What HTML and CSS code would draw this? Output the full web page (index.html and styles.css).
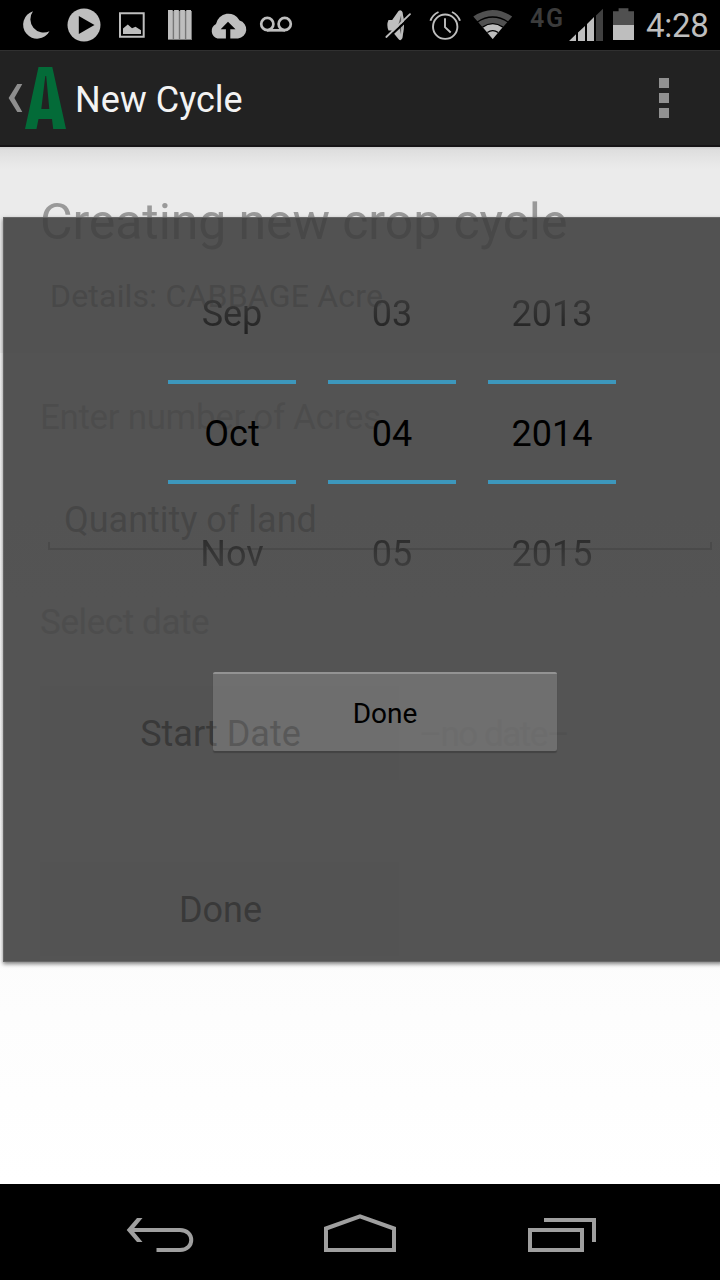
FILE: index.html
```html
<!DOCTYPE html>
<html lang="en">
<head>
<meta charset="utf-8">
<title>New Cycle</title>
<link rel="stylesheet" href="styles.css">
</head>
<body>
<div class="screen">
  <header class="status">
    <svg class="ico" width="60" height="50" viewBox="0 0 60 50"><path fill="#bebebe" d="M33 11.3A14 14 0 1 0 49.5 31.2A13.3 13.3 0 0 1 33 11.3Z"/></svg>
    <svg class="ico" width="48" height="50" viewBox="60 0 48 50"><circle cx="84" cy="25" r="16.5" fill="#bebebe"/><path d="M78.8 16L94.5 25L78.8 34Z"/></svg>
    <svg class="ico" width="48" height="50" viewBox="108 0 48 50"><path fill="none" stroke="#bebebe" stroke-width="2" d="M120 13.3h23.7v23.4H120z"/><path fill="#bebebe" d="M123 28.5L127.8 24.6L132 28.2L135.5 26.8L141 30.2V34H123Z"/></svg>
    <svg class="ico" width="48" height="50" viewBox="156 0 48 50"><path fill="#777" d="M168 11h24v29h-24z"/><path fill="#bebebe" d="M168 10h4.7v29H168zM174.1 10h4.7v29h-4.7zM180.2 10h4.7v29h-4.7zM186.3 10h4.7v29h-4.7z"/></svg>
    <svg class="ico" width="48" height="50" viewBox="204 0 48 50"><path fill="#bebebe" d="M217.5 38.5A7.8 7.8 0 0 1 216 24A12.6 12.6 0 0 1 239.6 20.5A9.2 9.2 0 0 1 238 38.5Z"/><path d="M228 21.8L235.5 29.3H230.3V39H225.9V29.3H220.7Z"/></svg>
    <svg class="ico" width="48" height="50" viewBox="252 0 48 50"><g fill="none" stroke="#bebebe" stroke-width="2.7"><circle cx="267.3" cy="24" r="6.1"/><circle cx="284.7" cy="24" r="6.1"/><path d="M267 30.3h18"/></g></svg>
    <span class="grow"></span>
    <svg class="ico" width="44" height="50" viewBox="376 0 44 50"><path fill="#bebebe" d="M388.500 20h3.700L398.500 11Q400.800 9 402.500 12V38Q400.500 42 398 38.500L391.500 30.500H388.500Q386.200 25 388.500 20Z"/><path d="M398.500 24L401.200 15V35Z" opacity=".55"/><path fill="none" stroke="#bebebe" stroke-width="1.6" d="M401 11.5Q403.400 17 403.200 25T401 38"/><path stroke="#000" stroke-width="2.4" d="M387.500 38.500L412 15.500"/><path stroke="#bebebe" stroke-width="1.8" stroke-linecap="round" d="M386.300 37L410 14.200"/></svg>
    <svg class="ico" width="48" height="50" viewBox="420 0 48 50"><g fill="none" stroke="#bebebe" stroke-width="1.9"><circle cx="445.2" cy="26.7" r="12.2"/><path d="M445 18.3v8.8l5.7 5.4M430.400 20.800Q432.300 15 438.500 12M460 20.800Q458 15 452 12"/></g></svg>
    <svg class="ico" width="56" height="50" viewBox="468 0 56 50"><path fill="#505050" d="M492.7 39L473.3 16.5Q492.7 3.5 512.2 16.5Z"/><path fill="#bebebe" d="M492.7 39L482.7 27Q492.7 20.7 502.7 27Z"/><g fill="none" stroke="#000" stroke-width="1.3"><path d="M477 22.2Q492.7 11.8 508.4 22.2M482.5 27.1Q492.7 20 503 27.1M487.3 32.5Q492.7 28.7 498.2 32.5"/></g></svg>
    <span class="net">4G</span>
    <svg class="ico" width="38" height="50" viewBox="568 0 38 50"><path fill="#bebebe" d="M569 41L576 34.2V41zM578 32.5L585 26V41h-7zM587 24L594 17V41h-7z"/><path fill="#404040" d="M596 15.5L603 8.8V41h-7z"/></svg>
    <svg class="ico" width="40" height="50" viewBox="606 0 40 50"><path fill="#505050" d="M613 11.3h5.6V8.3h9.8v3H634V25h-21z"/><path fill="#bebebe" d="M613 25h21v15h-21z"/></svg>
    <span class="clock">4:28</span>
  </header>
  <div class="actionbar">
    <svg class="ico" width="75" height="95" viewBox="0 51 75 95"><path fill="#8e8e8e" d="M22.3 84H17.3L8.6 98L17.3 112H22.3L14.4 98Z"/><path fill="#036b38" fill-rule="evenodd" d="M38.500 67H52.300L66 129H53.200L52 119H38.500L36.500 129H25ZM45.300 76L41.300 109H49.300L46.200 76Z"/></svg>
    <h1 class="title">New Cycle</h1>
    <span class="grow"></span>
    <div class="more"><i></i><i></i><i></i></div>
  </div>
  <main class="page">
    <section class="intro">
      <h2 class="heading">Creating new crop cycle</h2>
      <p class="details">Details: CABBAGE Acre</p>
    </section>
    <section class="form">
      <p class="label acres">Enter number of Acres</p>
      <div class="field"><span class="hint">Quantity of land</span></div>
      <p class="label date">Select date</p>
      <div class="row"><div class="btn start">Start Date</div><span class="nodate">–no date–</span></div>
      <div class="btn">Done</div>
    </section>
    <div class="popup">
      <div class="picker">
        <div class="col"><span class="prev">Sep</span><span class="now">Oct</span><span class="next">Nov</span></div>
        <div class="col"><span class="prev">03</span><span class="now">04</span><span class="next">05</span></div>
        <div class="col"><span class="prev">2013</span><span class="now">2014</span><span class="next">2015</span></div>
      </div>
      <div class="done">Done</div>
    </div>
  </main>
  <nav class="nav">
    <svg width="720" height="96" viewBox="0 1184 720 96" fill="none" stroke="#9f9f9f" stroke-width="4"><path d="M130 1230H180C195 1230 195 1250 180 1250H156.500"/><path fill="#9f9f9f" stroke="none" d="M137 1218H142.500L132.500 1230L142.500 1242H137L126.700 1230Z"/><path d="M326 1228.500L360 1216.300L394 1228.500V1250H326Z"/><path d="M530 1230H582V1250H530ZM544 1220H594V1242"/></svg>
  </nav>
</div>
</body>
</html>
```
FILE: styles.css
```css
* { box-sizing: border-box; }
body { margin: 0; font-family: Roboto, "Noto Sans", sans-serif; }
h1, h2, p { margin: 0; font-weight: 400; }
.screen { width: 720px; height: 1280px; display: flex; flex-direction: column; overflow: hidden; background: #000; }
.ico { display: block; flex: none; }
.grow { flex: 1; }

.status { height: 50px; display: flex; }
.net { width: 44px; padding-left: 6px; font-size: 25px; line-height: 38px; font-weight: 600; color: #3b3b3b; letter-spacing: 1.6px; }
.clock { width: 74px; font-size: 33px; line-height: 52px; letter-spacing: -0.3px; color: #bebebe; }

.actionbar { height: 97px; display: flex; align-items: stretch; background: #222; border-top: 1px solid #303030; border-bottom: 2px solid #161416; }
.title { font-size: 36px; line-height: 98px; color: #f3f3f3; }
.more { width: 61px; padding-top: 27px; display: flex; flex-direction: column; gap: 5px; }
.more i { width: 10px; height: 10px; background: #919191; }

.page { position: relative; height: 1037px; overflow: hidden; background: linear-gradient(#f5f5f5 200px, #fff 1037px); white-space: nowrap; }
.intro { height: 206px; padding: 45px 0 0 40px; background: linear-gradient(#cfcfcf, #dedede 3px, #e5e5e5 12px, #ebebeb 22px); }
.heading { font-size: 50px; line-height: 60px; letter-spacing: -0.09px; color: #999; }
.details { padding: 24px 0 0 10px; font-size: 32px; line-height: 40px; letter-spacing: 0.2px; color: #999; }
.form { padding: 43px 0 0 40px; }
.label { font-size: 35px; line-height: 44px; letter-spacing: -0.35px; color: #bebebe; }
.field { height: 54px; margin: 56px 8px 0; padding-left: 16px; background:
  linear-gradient(#aaa, #aaa) 0 100% / 100% 2px no-repeat,
  linear-gradient(#aaa, #aaa) 0 100% / 2px 8px no-repeat,
  linear-gradient(#aaa, #aaa) 100% 100% / 2px 8px no-repeat; }
.hint { display: block; padding-top: 1px; font-size: 36px; line-height: 46px; color: #8d8d8d; }
.label.date { margin-top: 51px; letter-spacing: -0.4px; color: #c2c2c2; }
.row { display: flex; height: 94px; margin: 41px 0 82px; }
.btn { width: 359px; height: 94px; padding-left: 2px; font-size: 36px; line-height: 97px; text-align: center; background: #f2f2f2; color: #222; }
.nodate { margin-left: 20px; font-size: 35px; line-height: 97px; letter-spacing: -1.5px; color: #d8d8d8; }

.popup { position: absolute; left: 3px; top: 70px; width: 720px; height: 745px; padding: 36px 0 0 164px; background: rgba(60, 60, 60, .88); border: 1px solid rgba(110, 110, 110, .75); box-shadow: 0 2px 4px rgba(0, 0, 0, .5); }
.picker { display: flex; gap: 32px; height: 360px; }
.col { width: 128px; display: grid; grid-template-rows: 126px 104px 126px; font-size: 36px; text-align: center; }
.now { line-height: 100px; border-top: 4px solid #3d97bc; border-bottom: 4px solid #3d97bc; height: 104px; color: #000; }
.prev, .next { color: transparent; background-clip: text; -webkit-background-clip: text; line-height: 120px; }
.prev { background-image: linear-gradient(#484848 20px, #222 80px); }
.next { background-image: linear-gradient(#242424 40px, #484848 100px); line-height: 140px; }
.done { width: 344px; height: 79px; margin: 58px 0 0 45px; background: rgba(255, 255, 255, .16); border-radius: 2px; border-top: 2px solid rgba(255, 255, 255, .25); box-shadow: 0 2px 1px rgba(0, 0, 0, .2); font-size: 28px; line-height: 80px; text-align: center; color: #000; }

.nav { height: 96px; }
.nav svg { display: block; }
```
